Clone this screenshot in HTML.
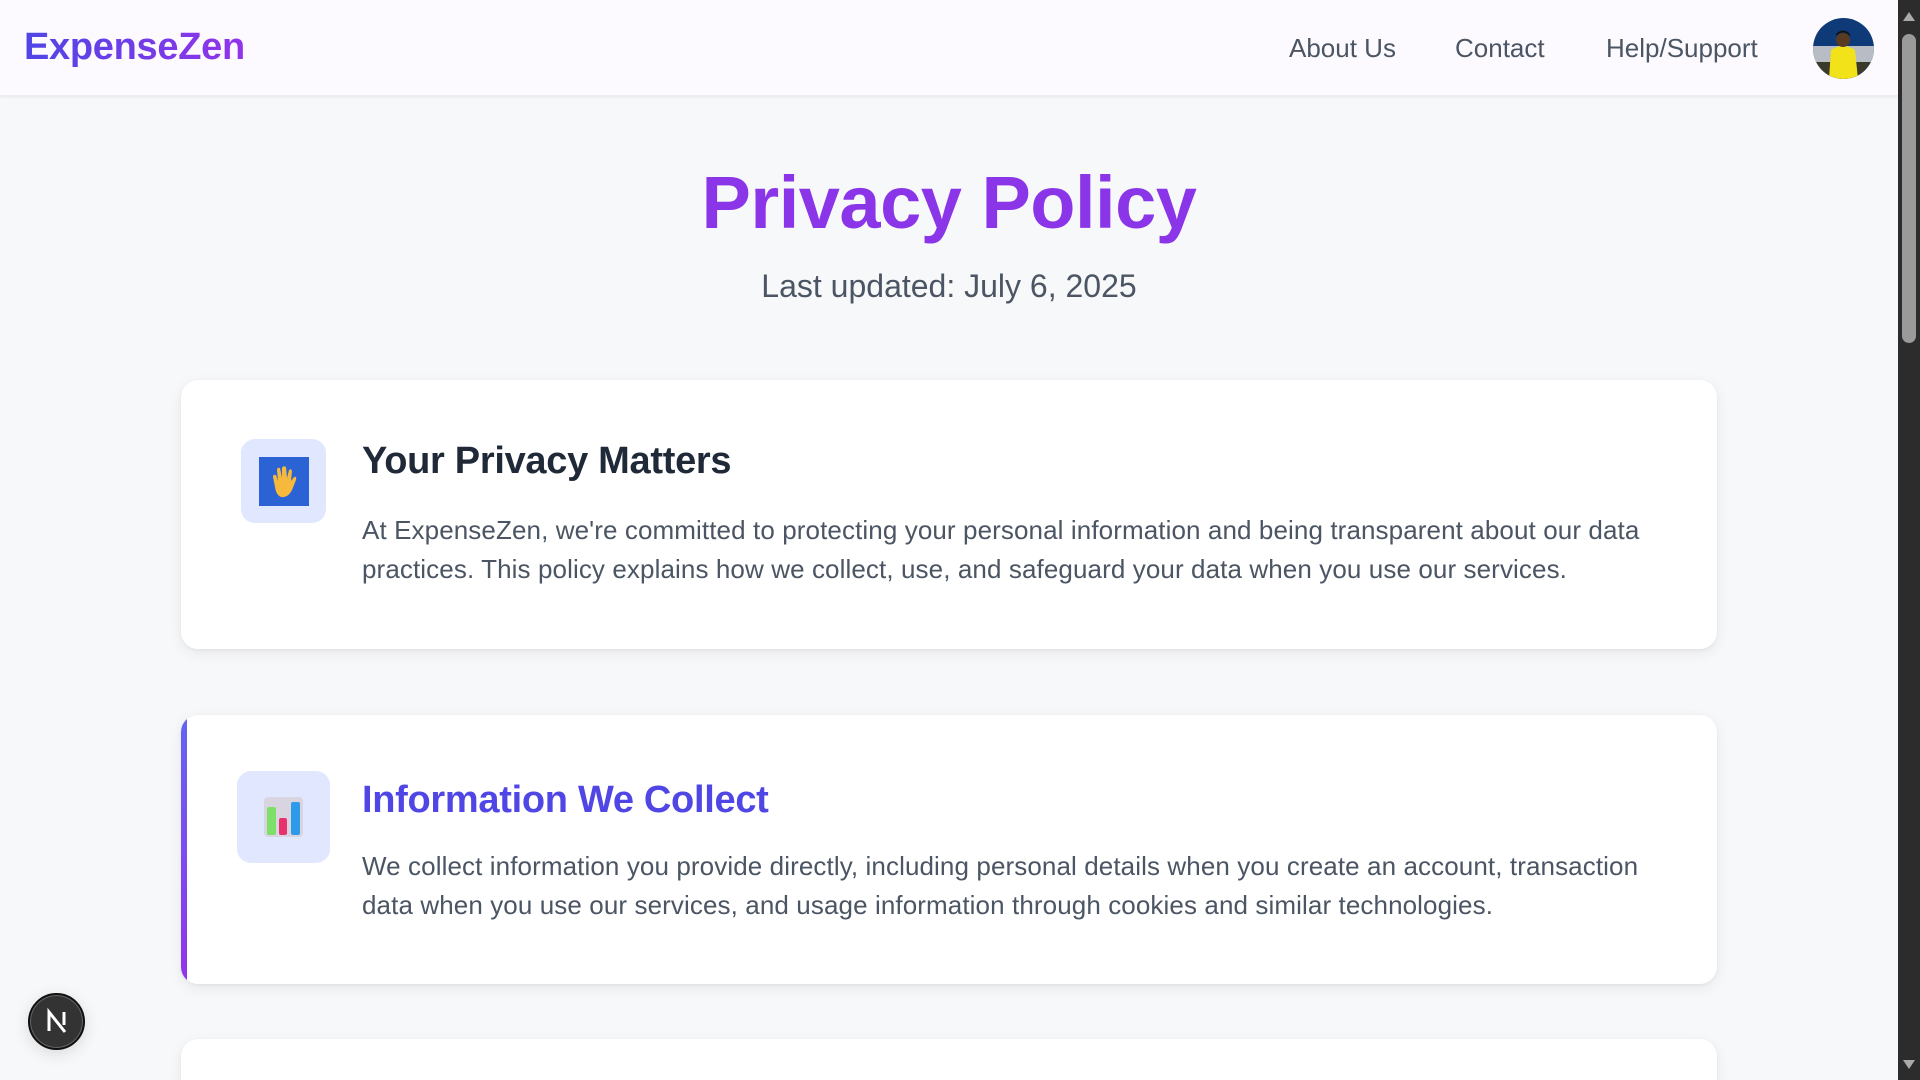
<!DOCTYPE html>
<html><head><meta charset="utf-8"><style>
*{margin:0;padding:0;box-sizing:border-box}
html,body{width:1920px;height:1080px;overflow:hidden}
body{background:#f7f8fa;font-family:"Liberation Sans",sans-serif;position:relative}
.hdr{position:absolute;left:0;top:0;width:1898px;height:96px;background:#fcfaff;box-shadow:0 1px 3px rgba(0,0,0,.07);border-bottom:1px solid #eee}
.logo{position:absolute;left:24px;top:26px;font-size:38px;font-weight:bold;background:linear-gradient(90deg,#4f46e5,#9333ea);-webkit-background-clip:text;color:transparent;letter-spacing:-.3px}
.nav{position:absolute;top:33px;font-size:26px;color:#4b5563}
.av{position:absolute;left:1813px;top:18px;width:61px;height:61px;border-radius:50%;overflow:hidden}
.sb{position:absolute;left:1898px;top:0;width:22px;height:1080px;background:#2c2c2c}
.th{position:absolute;left:4px;top:34px;width:14px;height:309px;background:#9a9a9a;border-radius:7px}
h1{position:absolute;left:0;width:1898px;top:160px;text-align:center;font-size:74px;font-weight:bold;color:#8b35e8;letter-spacing:-.5px}
.sub{position:absolute;left:0;width:1898px;top:268px;text-align:center;font-size:32px;color:#4b5563}
.card{position:absolute;left:181px;width:1536px;background:#fff;border-radius:17px;box-shadow:0 4px 14px rgba(0,0,0,.07),0 1px 3px rgba(0,0,0,.05);overflow:hidden}
.card h2{position:absolute;left:181px;font-size:38px;font-weight:bold;color:#1f2937;letter-spacing:-.3px}
.card p{position:absolute;left:181px;width:1310px;font-size:26px;line-height:39px;color:#4b5563;letter-spacing:.1px}
.ib{position:absolute;background:#e0e7ff;border-radius:14px}
.bar{position:absolute;left:0;top:0;width:6px;height:100%;background:linear-gradient(180deg,#6366f1,#9333ea)}
.n{position:absolute;left:28px;top:993px;width:57px;height:57px;border-radius:50%;background:#333;border:2px solid #111;box-shadow:0 0 0 1px #666 inset,0 4px 16px rgba(0,0,0,.12)}
</style></head><body>
<div class="hdr">
<div class="logo">ExpenseZen</div>
<div class="nav" style="left:1289px">About Us</div>
<div class="nav" style="left:1455px">Contact</div>
<div class="nav" style="left:1606px">Help/Support</div>
<div class="av"><svg width="61" height="61" viewBox="0 0 61 61"><rect width="61" height="61" fill="#0f3a78"/><rect y="28" width="61" height="20" fill="#b8bcc4"/><rect y="44" width="61" height="17" fill="#3a3a2a"/><path d="M16 61 L18 32 Q30 24 42 32 L45 61Z" fill="#f2e21a"/><circle cx="30" cy="22" r="7" fill="#5a3a22"/><path d="M23 18 Q30 11 37 18 L37 16 Q30 9 23 16Z" fill="#111"/></svg></div>
</div>
<h1>Privacy Policy</h1>
<div class="sub">Last updated: July 6, 2025</div>

<div class="card" style="top:380px;height:269px">
<div class="ib" style="left:60px;top:59px;width:85px;height:84px">
<svg style="position:absolute;left:18px;top:18px" width="50" height="49" viewBox="0 0 50 49"><rect width="50" height="49" fill="#2b62d4"/>
<path d="M16 30 L14 20 Q14 17 17 18 L19 24 L18 13 Q18 10 21 11 L23 21 L23 11 Q24 8 27 10 L28 21 L30 13 Q32 11 33 14 L32 24 L35 20 Q38 19 37 23 L33 33 Q29 41 22 40 Q17 38 16 30Z" fill="#f6b93b"/></svg>
</div>
<h2 style="top:60px">Your Privacy Matters</h2>
<p style="top:131px">At ExpenseZen, we're committed to protecting your personal information and being transparent about our data practices. This policy explains how we collect, use, and safeguard your data when you use our services.</p>
</div>

<div class="card" style="top:715px;height:269px">
<div class="bar"></div>
<div class="ib" style="left:56px;top:56px;width:93px;height:92px">
<svg style="position:absolute;left:27px;top:26px" width="39" height="40" viewBox="0 0 39 40"><rect width="39" height="40" rx="4" fill="#d8d5e0"/>
<rect x="3" y="10" width="9" height="28" rx="2" fill="#7ee06a"/><rect x="15" y="21" width="8" height="17" rx="2" fill="#e8326e"/><rect x="27" y="5" width="9" height="33" rx="2" fill="#2f9ae8"/></svg>
</div>
<h2 style="top:64px;color:#4f46e5">Information We Collect</h2>
<p style="top:132px">We collect information you provide directly, including personal details when you create an account, transaction data when you use our services, and usage information through cookies and similar technologies.</p>
</div>

<div class="card" style="top:1039px;height:120px"></div>
<div class="n"><svg width="53" height="53" viewBox="0 0 53 53"><path d="M19 36 V17 L35 37 M34 17 V30" stroke="#fff" stroke-width="3" fill="none"/></svg></div>
<div class="sb"><svg style="position:absolute;left:5px;top:12px" width="12" height="9"><path d="M6 0 L12 9 H0Z" fill="#aaa"/></svg><div class="th"></div><svg style="position:absolute;left:5px;top:1060px" width="12" height="9"><path d="M0 0 H12 L6 9Z" fill="#aaa"/></svg></div>
</body></html>
